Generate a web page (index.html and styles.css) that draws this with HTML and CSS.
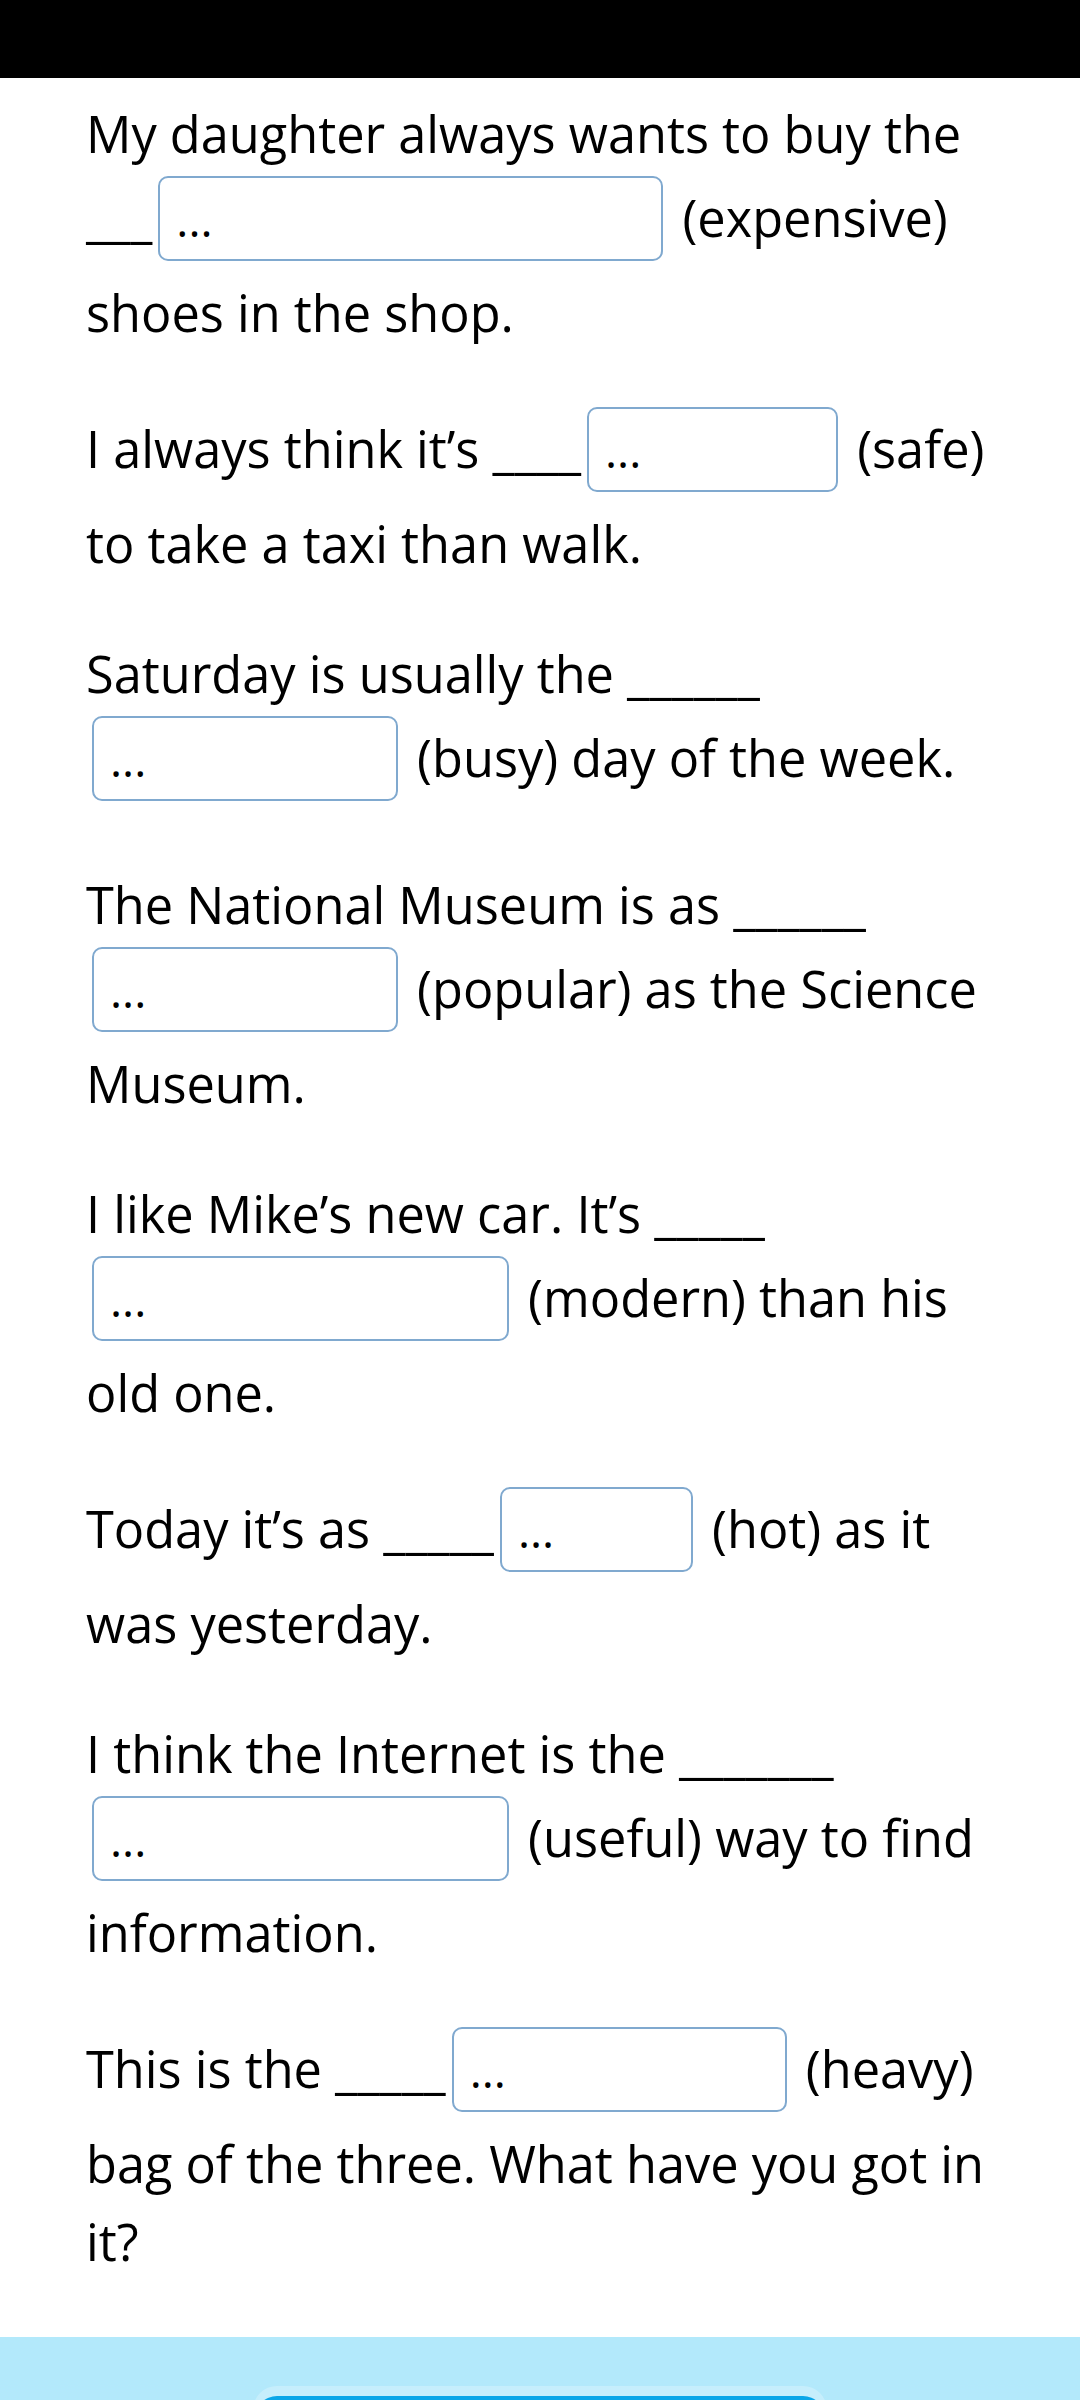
FILE: index.html
```html
<!DOCTYPE html>
<html lang="en">
<head>
<meta charset="utf-8">
<title>Exercise</title>
<link rel="stylesheet" href="styles.css">
</head>
<body>
<div class="statusbar"></div>
<main class="content">
  <p class="item">My daughter always wants to buy the ___<span class="blank w505">...</span> (expensive) shoes in the shop.</p>
  <p class="item">I always think it’s ____<span class="blank w251">...</span> (safe) to take a taxi than walk.</p>
  <p class="item">Saturday is usually the ______<span class="blank w306">...</span> (busy) day of the week.</p>
  <p class="item">The National Museum is as ______<span class="blank w306">...</span> (popular) as the Science Museum.</p>
  <p class="item">I like Mike’s new car. It’s _____<span class="blank w417">...</span> (modern) than his old one.</p>
  <p class="item">Today it’s as _____<span class="blank w193">...</span> (hot) as it was yesterday.</p>
  <p class="item">I think the Internet is the _______<span class="blank w417">...</span> (useful) way to find information.</p>
  <p class="item">This is the _____<span class="blank w335">...</span> (heavy) bag of the three. What have you got in it?</p>
</main>
<footer class="footer">
  <div class="button"></div>
</footer>
</body>
</html>
```
FILE: styles.css
```css
html, body {
  margin: 0;
  padding: 0;
  background: #ffffff;
}
body {
  width: 1080px;
  height: 2400px;
  overflow: hidden;
  display: flex;
  flex-direction: column;
  font-family: "Open Sans", "Noto Sans", sans-serif;
  color: #000000;
}
.statusbar {
  height: 78px;
  flex: 0 0 78px;
  background: #000000;
}
.content {
  flex: 1 1 auto;
  overflow: hidden;
  padding: 17px 86px 0 86px;
  display: flex;
  flex-direction: column;
  gap: 52px;
}
.item {
  margin: 0;
  font-size: 50.5px;
  line-height: 78px;
}
.blank {
  display: inline-block;
  box-sizing: border-box;
  height: 85px;
  margin: 3px 6px 13px 6px;
  padding: 18px 16px 0 16px;
  border: 2px solid #80a9cf;
  border-radius: 10px;
  font-size: 46px;
  line-height: 46px;
  vertical-align: baseline;
  background: #ffffff;
}
.w505 { width: 505px; }
.w251 { width: 251px; }
.w306 { width: 306px; }
.w417 { width: 417px; }
.w193 { width: 193px; }
.w335 { width: 335px; }
.footer {
  flex: 0 0 63px;
  height: 63px;
  background: #b3e9fb;
  display: flex;
  justify-content: center;
  overflow: hidden;
}
.button {
  width: 570px;
  height: 120px;
  margin-top: 59px;
  border-radius: 22px;
  background: #0aa6e8;
  box-shadow: 0 -8px 0 2px rgba(255,255,255,0.25);
}
```
